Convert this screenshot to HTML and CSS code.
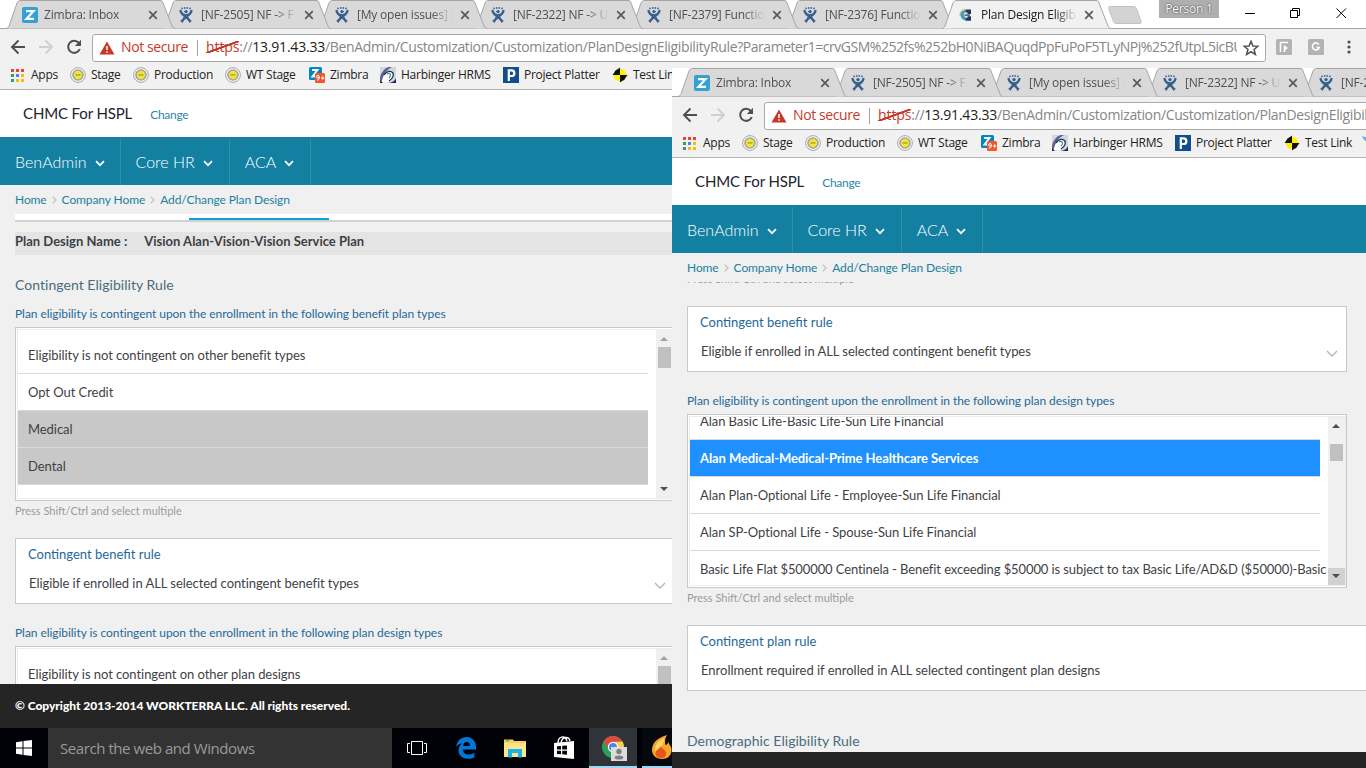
FILE: index.html
```
<!DOCTYPE html>
<html lang="en">
<head>
    <meta charset="UTF-8">
    <meta name="viewport" content="width=device-width, initial-scale=1.0">
    <title>Plan Design Eligibility Rule</title>
    <link rel="stylesheet" href="styles.css">
</head>
<body>

    <!-- Shared icons -->
    <svg class="sprite" aria-hidden="true">
        <symbol id="tab-shape" viewBox="0 0 169 29">
            <path d="M0 28.5 C2 28 2.500 27 3 26 L11 3 C12 1 13 .5 14 .5 H154 C156 .5 156.500 1 157 3 L166 26 C166.500 27.500 167 28 169 28.500" stroke="#a6a6a6"/>
        </symbol>
        <symbol id="zimbra" viewBox="0 0 16 16">
            <rect width="16" height="16" rx="2" fill="#35a0d4"/>
            <path d="M4 4.200 H11.500 L4.500 11.800 H12" fill="none" stroke="#fff" stroke-width="2.200"/>
        </symbol>
        <symbol id="jira" viewBox="0 0 14 16">
            <g fill="#39618d">
                <circle cx="3" cy="1.300" r=".9"/><circle cx="5.700" cy=".9" r=".9"/><circle cx="8.300" cy=".9" r=".9"/><circle cx="11" cy="1.300" r=".9"/>
                <circle cx="7" cy="4.600" r="1.700"/>
                <path d="M.3 3.300 L2.500 2.800 C3 5.500 4.300 7 7 7.300 C9.700 7 11 5.500 11.500 2.800 L13.700 3.300 C13.200 6.500 11.700 8.300 9.300 9.500 C9.700 11.200 11 12.700 12.700 13.700 L10.700 16 C9.500 14.500 8.500 12.600 7 11.800 C5.500 12.600 4.500 14.500 3.300 16 L1.300 13.700 C3 12.700 4.300 11.200 4.700 9.500 C2.300 8.300 .8 6.500 .3 3.300Z"/>
            </g>
        </symbol>
        <symbol id="close" viewBox="0 0 10 10">
            <path d="M1.200 1.200 L8.800 8.800 M8.800 1.200 L1.200 8.800" stroke="#5a5a5a" stroke-width="1.700"/>
        </symbol>
        <symbol id="back" viewBox="0 0 16 16">
            <path d="M8.500 1.500 L2 8 L8.500 14.500 M2 8 H15" fill="none" stroke="#4f4f4f" stroke-width="1.900"/>
        </symbol>
        <symbol id="forward" viewBox="0 0 16 16">
            <path d="M7.500 1.500 L14 8 L7.500 14.500 M14 8 H1" fill="none" stroke="#d0d0d0" stroke-width="1.900"/>
        </symbol>
        <symbol id="reload" viewBox="0 0 16 16">
            <path d="M12.800 4 A6 6 0 1 0 13.800 10" fill="none" stroke="#4f4f4f" stroke-width="2"/>
            <path d="M15 .8 V7 H8.800Z" fill="#4f4f4f"/>
        </symbol>
        <symbol id="warning" viewBox="0 0 16 14">
            <path d="M8 .5 L15.500 13.500 H.5Z" fill="#c53929"/>
            <path d="M8 5 V9 M8 10.200 V11.800" stroke="#fff" stroke-width="1.500"/>
        </symbol>
        <symbol id="apps" viewBox="0 0 13 13">
            <g fill="#ea4335"><path d="M0 0h3v3H0zM5 0h3v3H5zM10 0h3v3h-3z"/></g>
            <path d="M0 5h3v3H0zM0 10h3v3H0z" fill="#34a065"/>
            <path d="M5 5h3v3H5z" fill="#4285f4"/>
            <path d="M10 5h3v3h-3zM5 10h3v3H5zM10 10h3v3h-3z" fill="#fbbc05"/>
        </symbol>
        <symbol id="stage" viewBox="0 0 16 16">
            <circle cx="8" cy="8" r="7.400" fill="#f6f6f6" stroke="#a8a8a8"/>
            <circle cx="8" cy="8" r="5" fill="#f2e535" stroke="#a3a3a3" stroke-width="1.600"/>
            <path d="M5.500 8.600 H10.500 V7.200 H5.500Z" fill="#a89f3a"/>
        </symbol>
        <symbol id="zimbra-badge" viewBox="0 0 16 16">
            <rect width="13" height="13" rx="1.500" fill="#0087c3"/>
            <path d="M3 3 H8.500 L3.500 9.500 H7" fill="none" stroke="#fff" stroke-width="1.900"/>
            <rect x="6" y="6" width="10" height="10" rx="1.500" fill="#f1592a"/>
            <circle cx="9" cy="9.800" r="1.300" fill="none" stroke="#fff"/>
            <path d="M10.400 9.800 C10.400 12 10 13 8 13.200 M12 11 H15.400 M13.700 9.300 V12.700" fill="none" stroke="#fff"/>
        </symbol>
        <symbol id="harbinger" viewBox="0 0 16 16">
            <rect width="16" height="16" fill="#d4d6dc"/>
            <path d="M0 16 V11 C1 5 5 1 9 0 H12 C6 3 4 8 3 12Z" fill="#5b6192"/>
            <path d="M2 15.500 C2 9 6 4 11 5 C15 7 14 12 8 15.500Z" fill="#fff"/>
            <path d="M4 8 C7 3.500 11 3.500 13 6 C14 9 12 12 9 14" fill="none" stroke="#252558" stroke-width="1.300"/>
            <path d="M7 7 C10 5 12 8 9 11" fill="none" stroke="#2f9e8e" stroke-width="1.200"/>
            <path d="M16 11 V16 H9 C13 15 15 14 16 11Z M0 13 L3 16 H0Z" fill="#252558"/>
        </symbol>
        <symbol id="platter" viewBox="0 0 16 16">
            <rect width="16" height="16" fill="#124e8c"/>
            <path d="M5.800 14 V3.300 H8.500 A2.600 2.600 0 0 1 8.500 9 H6" fill="none" stroke="#fff" stroke-width="2.200"/>
        </symbol>
        <symbol id="testlink" viewBox="0 0 16 16">
            <circle cx="8" cy="8" r="6.300" fill="#fff200"/>
            <path d="M8 8 V.5 L6 2 A6.300 6.300 0 0 0 2 6 L.5 8Z M8 8 V15.500 L10 14 A6.300 6.300 0 0 0 14 10 L15.500 8Z" fill="#111"/>
        </symbol>
        <symbol id="caret" viewBox="0 0 10 7">
            <path d="M1 1.200 L5 5.200 L9 1.200" fill="none" stroke="#fff" stroke-width="1.700"/>
        </symbol>
        <symbol id="crumb-arrow" viewBox="0 0 5 8">
            <path d="M.8 .8 L4 4 L.8 7.200" fill="none" stroke="#c4c4c4" stroke-width="1.300"/>
        </symbol>
        <symbol id="select-arrow" viewBox="0 0 12 8">
            <path d="M1 1 L6 6 L11 1" fill="none" stroke="#b4b4b4" stroke-width="1.300"/>
        </symbol>
    </svg>

    <div class="window main-window">
        <div class="tabs">
            <div class="tab"><svg class="shape"><use href="#tab-shape"/></svg><svg class="fav"><use href="#zimbra"/></svg><span class="title">Zimbra: Inbox</span><svg class="x"><use href="#close"/></svg></div>
            <div class="tab"><svg class="shape"><use href="#tab-shape"/></svg><svg class="fav"><use href="#jira"/></svg><span class="title">[NF-2505] NF -&gt; F</span><svg class="x"><use href="#close"/></svg></div>
            <div class="tab"><svg class="shape"><use href="#tab-shape"/></svg><svg class="fav"><use href="#jira"/></svg><span class="title">[My open issues] I</span><svg class="x"><use href="#close"/></svg></div>
            <div class="tab"><svg class="shape"><use href="#tab-shape"/></svg><svg class="fav"><use href="#jira"/></svg><span class="title">[NF-2322] NF -&gt; U</span><svg class="x"><use href="#close"/></svg></div>
            <div class="tab"><svg class="shape"><use href="#tab-shape"/></svg><svg class="fav"><use href="#jira"/></svg><span class="title">[NF-2379] Functio</span><svg class="x"><use href="#close"/></svg></div>
            <div class="tab"><svg class="shape"><use href="#tab-shape"/></svg><svg class="fav"><use href="#jira"/></svg><span class="title">[NF-2376] Functio</span><svg class="x"><use href="#close"/></svg></div>
            <div class="tab active"><svg class="shape"><use href="#tab-shape"/></svg>
                <svg class="fav" viewBox="0 0 16 16">
                    <path d="M7 2 C3.500 3 1.800 5.500 2 9" fill="none" stroke="#e6c25a" stroke-width="1.300"/>
                    <path d="M2.500 7 C2.500 11 4.500 13 7.500 13.500 V10 C6 9.500 5.500 8 6 6.500 L7.500 5 V2.800 C5 3.500 3 5 2.500 7Z" fill="#3f9dc4"/>
                    <path d="M7.500 2.500 H13 V7 H9.500 V5.500 H7.500Z M7.500 13.800 H13 V9.200 H9.500 V10.700 H7.500Z" fill="#223a5e"/>
                    <path d="M6.500 8.100 H12" stroke="#223a5e" stroke-width="1.300"/>
                </svg>
                <span class="title">Plan Design Eligib</span><svg class="x"><use href="#close"/></svg></div>
            <svg class="new-tab" viewBox="0 0 34 18"><path d="M3 .5 H25 C27 .5 28 1 28.500 2.500 L33 15 C33.500 17 33 17.500 31 17.500 H9 C7 17.500 6 17 5.500 15.500 L.8 3 C.3 1 1 .5 3 .5Z" fill="#d3d3d3" stroke="#c2c2c2"/></svg>
            <span class="person">Person 1</span>
            <svg class="controls" viewBox="0 0 104 12" fill="none" stroke="#000">
                <path d="M0 6.500 H10 M45.500 3.500 H52.500 V10.500 H45.500Z M47.500 3.500 V1.500 H54.500 V8.500 H52.500 M91.500 1.500 L101 11 M101 1.500 L91.500 11"/>
            </svg>
        </div>

        <div class="toolbar">
            <svg class="nav-icon"><use href="#back"/></svg>
            <svg class="nav-icon"><use href="#forward"/></svg>
            <svg class="nav-icon"><use href="#reload"/></svg>
            <div class="address">
                <svg class="warn"><use href="#warning"/></svg>
                <span class="insecure">Not secure</span>
                <span class="url"><span class="scheme">https</span>://<b>13.91.43.33</b>/BenAdmin/Customization/Customization/PlanDesignEligibilityRule?<span class="query">Parameter1=crvGSM%252fs%252bH0NiBAQuqdPpFuPoF5TLyNPj%252fUtpL5icBU</span></span>
                <svg class="star" viewBox="0 0 14 14"><path d="M7 1.200 L8.700 5.200 L13 5.500 L9.700 8.300 L10.800 12.600 L7 10.300 L3.200 12.600 L4.300 8.300 L1 5.500 L5.300 5.200Z" fill="none" stroke="#555" stroke-width="1.400"/></svg>
            </div>
            <svg class="ext" viewBox="0 0 16 16"><rect width="16" height="16" rx="1.500" fill="#b3b3b3"/><path d="M4.500 13 V3.500 H12 M8.500 13 V7" fill="none" stroke="#fff" stroke-width="1.500"/><path d="M8 6 L12 9 L8 12Z" fill="#fff"/></svg>
            <svg class="ext" viewBox="0 0 16 16"><rect width="16" height="16" rx="1.500" fill="#b3b3b3"/><path d="M10.800 5.500 A3.500 3.500 0 1 0 11.200 8.500 H8.500" fill="none" stroke="#fff" stroke-width="1.600"/></svg>
            <svg class="menu" viewBox="0 0 4 14"><g fill="#4f4f4f"><circle cx="2" cy="2" r="1.600"/><circle cx="2" cy="7" r="1.600"/><circle cx="2" cy="12" r="1.600"/></g></svg>
        </div>

        <div class="bookmarks">
            <span class="bm apps"><svg><use href="#apps"/></svg>Apps</span>
            <span class="bm"><svg><use href="#stage"/></svg>Stage</span>
            <span class="bm"><svg><use href="#stage"/></svg>Production</span>
            <span class="bm"><svg><use href="#stage"/></svg>WT Stage</span>
            <span class="bm"><svg><use href="#zimbra-badge"/></svg>Zimbra</span>
            <span class="bm"><svg><use href="#harbinger"/></svg>Harbinger HRMS</span>
            <span class="bm"><svg><use href="#platter"/></svg>Project Platter</span>
            <span class="bm"><svg><use href="#testlink"/></svg>Test Link</span>
        </div>

        <div class="site-header">
            <span class="company">CHMC For HSPL</span>
            <a class="change">Change</a>
        </div>
        <div class="site-nav">
            <a>BenAdmin <svg><use href="#caret"/></svg></a>
            <a>Core HR <svg><use href="#caret"/></svg></a>
            <a>ACA <svg><use href="#caret"/></svg></a>
        </div>
        <div class="crumbs">
            <a>Home</a><svg><use href="#crumb-arrow"/></svg><a>Company Home</a><svg><use href="#crumb-arrow"/></svg><a>Add/Change Plan Design</a>
        </div>

        <div class="content">
            <div class="step-bar"><div class="step-active"></div></div>
            <div class="plan-name"><span>Plan Design Name :</span><span>Vision Alan-Vision-Vision Service Plan</span></div>
            <h2>Contingent Eligibility Rule</h2>
            <p class="label">Plan eligibility is contingent upon the enrollment in the following benefit plan types</p>
            <div class="listbox">
                <div class="list">
                    <div class="options">
                        <div class="option">Eligibility is not contingent on other benefit types</div>
                        <div class="option">Opt Out Credit</div>
                        <div class="option chosen">Medical</div>
                        <div class="option chosen">Dental</div>
                    </div>
                    <div class="scroll"><i class="up off"></i><i class="thumb"></i><i class="down"></i></div>
                </div>
            </div>
            <p class="hint">Press Shift/Ctrl and select multiple</p>
            <div class="rule">
                <div class="rule-label">Contingent benefit rule</div>
                <div class="rule-value">Eligible if enrolled in ALL selected contingent benefit types<svg><use href="#select-arrow"/></svg></div>
            </div>
            <p class="label after-rule">Plan eligibility is contingent upon the enrollment in the following plan design types</p>
            <div class="listbox">
                <div class="list">
                    <div class="options">
                        <div class="option">Eligibility is not contingent on other plan designs</div>
                    </div>
                    <div class="scroll"><i class="up off"></i><i class="thumb"></i><i class="down"></i></div>
                </div>
            </div>
        </div>
        <div class="footer">© Copyright 2013-2014 WORKTERRA LLC. All rights reserved.</div>
    </div>

    <div class="taskbar">
        <div class="start"><svg viewBox="0 0 16 16"><path d="M0 2.200 L6.500 1.300 V7.500 H0Z M7.500 1.100 L16 0 V7.500 H7.500Z M0 8.500 H6.500 V14.700 L0 13.800Z M7.500 8.500 H16 V16 L7.500 14.900Z" fill="#fff"/></svg></div>
        <div class="search">Search the web and Windows</div>
        <div class="task"><svg viewBox="0 0 20 14" width="20" height="14"><path d="M4.500 .5 H15.500 V13.500 H4.500Z M3 2.500 H.5 V11.500 H3 M17 2.500 H19.500 V11.500 H17" fill="none" stroke="#fff"/></svg></div>
        <div class="task"><svg viewBox="0 0 20 22" width="20" height="22"><path d="M0 10 C1 3.500 5.500 0 10.500 0 C16.500 0 20 4.500 20 10 V12.500 H6.800 C7 16 9.500 17.500 12.500 17.500 C15 17.500 17 16.800 18.500 16 V20.200 C16.500 21.300 14.500 21.800 12 21.800 C6 21.800 2.500 18 2.500 13.500 C2.500 10.500 4 8 6.500 6.300 C3.500 6.500 1.500 8 0 10Z M7 9 H14 C14 6.500 13 5 10.800 5 C8.800 5 7.400 6.500 7 9Z" fill="#0078d7" fill-rule="evenodd"/></svg></div>
        <div class="task"><svg viewBox="0 0 22 19" width="22" height="19"><path d="M0 .5 H9 L10 2 H22 V18 H0Z" fill="#f5ce5c"/><path d="M0 4 H22 V18 H0Z" fill="#ffe48c"/><path d="M2 1 H5 V2.300 H2Z" fill="#5fb548"/><path d="M4 18.500 V10 H18 V18.500 H14 V14 H8 V18.500Z" fill="#1ab2e8"/></svg></div>
        <div class="task"><svg viewBox="0 0 22 24" width="22" height="24"><path d="M1 7 L21 5 V23 L1 21Z" fill="#fff"/><path d="M5 7 C5 0 12 -1 14 5 M8 7 C9 0 16 0 17 5" fill="none" stroke="#fff" stroke-width="1.400"/><path d="M4 10.300 L8 10 V13.500 H4Z M9.200 9.800 L14 9.400 V13.500 H9.200Z M4 14.700 H8 V18.200 L4 17.900Z M9.200 14.700 H14 V18.800 L9.200 18.300Z" fill="#05070a"/></svg></div>
        <div class="task open chrome"><svg viewBox="0 0 26 26" width="26" height="26">
            <circle cx="12" cy="12" r="11" fill="#27a25a"/>
            <path d="M2.500 6.500 A11 11 0 0 1 21.500 6.500 L12 7 L7.500 14Z" fill="#dd4b3e"/>
            <path d="M21.500 6.500 A11 11 0 0 1 12 23 L16.500 14 L12 7Z" fill="#fdd042"/>
            <circle cx="12" cy="12" r="5.200" fill="#fff"/><circle cx="12" cy="12" r="4" fill="#4387f0"/>
            <path d="M10 12 H26 V26 H10Z" fill="#dcdcdc"/><circle cx="18" cy="16.500" r="2.700" fill="#808080"/><ellipse cx="18" cy="22.500" rx="4.300" ry="2" fill="#808080"/></svg></div>
        <div class="task open flame"><svg viewBox="0 0 22 24" width="22" height="24">
            <path d="M16 0 C6 3 1 8 1 15 C1 20 5 24 11 24 C17 24 21 20 20.500 14 C20 11 18 10 17.500 7 C16.500 9 16 10 14.500 10 C13.500 7 14 3 16 0Z" fill="#f7a62a"/>
            <path d="M13 3 C6 7 3 11 4 17 C7 12 13 13 13 3Z" fill="#fdd66b"/>
            <path d="M9 11 C10 14 4 15 4.500 19 C5 22 8 23 10.500 23 C14 23 16 20 15 17 C14.500 15.500 13 16 13 14 C11.500 14 10.500 13 9 11Z" fill="#e4561c"/></svg></div>
    </div>

    <div class="window second-window">
        <div class="tabs">
            <div class="tab"><svg class="shape"><use href="#tab-shape"/></svg><svg class="fav"><use href="#zimbra"/></svg><span class="title">Zimbra: Inbox</span><svg class="x"><use href="#close"/></svg></div>
            <div class="tab"><svg class="shape"><use href="#tab-shape"/></svg><svg class="fav"><use href="#jira"/></svg><span class="title">[NF-2505] NF -&gt; F</span><svg class="x"><use href="#close"/></svg></div>
            <div class="tab"><svg class="shape"><use href="#tab-shape"/></svg><svg class="fav"><use href="#jira"/></svg><span class="title">[My open issues] I</span><svg class="x"><use href="#close"/></svg></div>
            <div class="tab"><svg class="shape"><use href="#tab-shape"/></svg><svg class="fav"><use href="#jira"/></svg><span class="title">[NF-2322] NF -&gt; U</span><svg class="x"><use href="#close"/></svg></div>
            <div class="tab"><svg class="shape"><use href="#tab-shape"/></svg><svg class="fav"><use href="#jira"/></svg><span class="title">[NF-2</span></div>
        </div>

        <div class="toolbar">
            <svg class="nav-icon"><use href="#back"/></svg>
            <svg class="nav-icon"><use href="#forward"/></svg>
            <svg class="nav-icon"><use href="#reload"/></svg>
            <div class="address">
                <svg class="warn"><use href="#warning"/></svg>
                <span class="insecure">Not secure</span>
                <span class="url"><span class="scheme">https</span>://<b>13.91.43.33</b>/BenAdmin/Customization/Customization/PlanDesignEligibil</span>
            </div>
        </div>

        <div class="bookmarks">
            <span class="bm apps"><svg><use href="#apps"/></svg>Apps</span>
            <span class="bm"><svg><use href="#stage"/></svg>Stage</span>
            <span class="bm"><svg><use href="#stage"/></svg>Production</span>
            <span class="bm"><svg><use href="#stage"/></svg>WT Stage</span>
            <span class="bm"><svg><use href="#zimbra-badge"/></svg>Zimbra</span>
            <span class="bm"><svg><use href="#harbinger"/></svg>Harbinger HRMS</span>
            <span class="bm"><svg><use href="#platter"/></svg>Project Platter</span>
            <span class="bm"><svg><use href="#testlink"/></svg>Test Link</span>
            <span class="bm"><svg viewBox="0 0 16 16"><path d="M0 1 C3 2 6 3 9 4 L6 7 C3 6 1 4 0 1Z" fill="#55b4e4"/></svg></span>
        </div>

        <div class="site-header">
            <span class="company">CHMC For HSPL</span>
            <a class="change">Change</a>
        </div>
        <div class="site-nav">
            <a>BenAdmin <svg><use href="#caret"/></svg></a>
            <a>Core HR <svg><use href="#caret"/></svg></a>
            <a>ACA <svg><use href="#caret"/></svg></a>
        </div>
        <div class="crumbs">
            <a>Home</a><svg><use href="#crumb-arrow"/></svg><a>Company Home</a><svg><use href="#crumb-arrow"/></svg><a>Add/Change Plan Design</a>
        </div>

        <div class="content">
            <p class="hint cut">Press Shift/Ctrl and select multiple</p>
            <div class="rule">
                <div class="rule-label">Contingent benefit rule</div>
                <div class="rule-value">Eligible if enrolled in ALL selected contingent benefit types<svg><use href="#select-arrow"/></svg></div>
            </div>
            <p class="label after-rule">Plan eligibility is contingent upon the enrollment in the following plan design types</p>
            <div class="listbox">
                <div class="list">
                    <div class="options scrolled">
                        <div class="option">Alan Basic Life-Basic Life-Sun Life Financial</div>
                        <div class="option selected">Alan Medical-Medical-Prime Healthcare Services</div>
                        <div class="option">Alan Plan-Optional Life - Employee-Sun Life Financial</div>
                        <div class="option">Alan SP-Optional Life - Spouse-Sun Life Financial</div>
                        <div class="option long">Basic Life Flat $500000 Centinela - Benefit exceeding $50000 is subject to tax Basic Life/AD&amp;D ($50000)-Basic</div>
                    </div>
                    <div class="scroll"><i class="up"></i><i class="thumb lower"></i><i class="down hover"></i></div>
                </div>
            </div>
            <p class="hint">Press Shift/Ctrl and select multiple</p>
            <div class="rule wide">
                <div class="rule-label">Contingent plan rule</div>
                <div class="rule-value">Enrollment required if enrolled in ALL selected contingent plan designs</div>
            </div>
            <h2 class="demographic">Demographic Eligibility Rule</h2>
        </div>
        <div class="footer"></div>
    </div>

</body>
</html>
```
FILE: styles.css
```
* {
    box-sizing: border-box;
}

body {
    margin: 0;
    width: 1366px;
    height: 768px;
    overflow: hidden;
    position: relative;
    background: #000207;
    font-family: Lato, "Liberation Sans", sans-serif;
    color: #3f3f46;
}

svg {
    display: block;
    flex: none;
}

.sprite {
    position: absolute;
    width: 0;
    height: 0;
}

p, h2 {
    margin: 0;
}

/* Windows */
.window {
    display: flex;
    flex-direction: column;
    overflow: hidden;
    background: #f0f0f0;
}

.main-window {
    width: 1366px;
    height: 728px;
}

.second-window {
    position: absolute;
    left: 672px;
    top: 68px;
    width: 694px;
    height: 700px;
}

/* Tab strip */
.tabs {
    display: flex;
    flex: none;
    height: 29px;
    padding-left: 6px;
    background: #fff;
    border-bottom: 1px solid #a6a6a6;
    position: relative;
    z-index: 0;
    font-family: "Open Sans", "Noto Sans", sans-serif;
    font-size: 12px;
    letter-spacing: -0.2px;
    color: #505050;
}

.tab {
    display: flex;
    flex: none;
    align-items: center;
    position: relative;
    width: 169px;
    height: 29px;
    margin-right: -13px;
    padding: 0 0 0 16px;
}

.tab:nth-child(1) { z-index: 6; }
.tab:nth-child(2) { z-index: 5; }
.tab:nth-child(3) { z-index: 4; }
.tab:nth-child(4) { z-index: 3; }
.tab:nth-child(5) { z-index: 2; }
.tab:nth-child(6) { z-index: 1; }

.shape {
    position: absolute;
    left: 0;
    top: 0;
    width: 169px;
    height: 29px;
    fill: #d9d9d9;
    z-index: -1;
}

.tab.active {
    z-index: 7;
    color: #222;
}

.active .shape {
    fill: #f1f1f1;
}

.fav {
    width: 16px;
    height: 16px;
}

.title {
    width: 98px;
    margin: 0 6px;
    line-height: 16px;
    white-space: nowrap;
    overflow: hidden;
    -webkit-mask-image: linear-gradient(to right, #000 76px, transparent 97px);
    mask-image: linear-gradient(to right, #000 76px, transparent 97px);
}

.tab:nth-child(n+2) .title {
    padding-left: 1px;
}

.x {
    width: 10px;
    height: 10px;
}

.new-tab {
    width: 34px;
    height: 18px;
    margin: 6px 0 0 10px;
}

.person {
    width: 60px;
    height: 18px;
    margin-left: 17px;
    background: #afafaf;
    color: #fff;
    line-height: 17px;
    text-align: center;
    text-shadow: 0 0 2px #444, 0 0 1px #555;
}

.controls {
    width: 104px;
    height: 12px;
    margin: 7px 0 0 26px;
}

/* Toolbar */
.toolbar {
    display: flex;
    flex: none;
    align-items: center;
    height: 33px;
    padding: 3px 0 0 10px;
    background: #f1f1f1;
    font-family: "Open Sans", "Noto Sans", sans-serif;
    font-size: 14px;
}

.nav-icon {
    width: 16px;
    height: 16px;
    margin-right: 12px;
}

.address {
    display: flex;
    flex: none;
    align-items: center;
    width: 1174px;
    height: 28px;
    margin: 1px 0 0 -2px;
    padding-left: 6px;
    background: #fff;
    border: 1px solid #a9a9a9;
    border-radius: 3px;
}

.warn {
    width: 16px;
    height: 14px;
}

.insecure {
    width: 77px;
    height: 16px;
    margin-left: 6px;
    line-height: 14px;
    border-right: 1px solid #a0a0a0;
    color: #c5392b;
    white-space: nowrap;
    letter-spacing: -0.4px;
}

.url {
    width: 1031px;
    margin: -2px 0 0 8px;
    line-height: 22px;
    overflow: hidden;
    white-space: nowrap;
    color: #868686;
    letter-spacing: -0.36px;
}

.url b {
    font-weight: normal;
    color: #222;
    letter-spacing: -0.2px;
}

.query {
    letter-spacing: -0.47px;
}

.scheme {
    color: #c5392b;
    letter-spacing: -0.1px;
    background: linear-gradient(to bottom right, transparent 45%, #c5392b 47%, #c5392b 54%, transparent 56%) 0 4px / 100% 12px no-repeat;
}

.star {
    width: 16px;
    height: 16px;
    margin-left: 6px;
}

.ext {
    width: 16px;
    height: 16px;
    margin-left: 10px;
}

.ext + .ext {
    margin-left: 16px;
}

.menu {
    width: 4px;
    height: 14px;
    margin-left: 23px;
}

/* Bookmarks bar */
.bookmarks {
    display: grid;
    flex: none;
    grid-template-columns: 59px 63px 92px 84px 71px 123px 109px 78px 16px;
    align-items: center;
    height: 28px;
    padding: 0 0 1px 11px;
    background: #f1f1f1;
    border-bottom: 1px solid #b4b4b4;
    font-family: "Open Sans", "Noto Sans", sans-serif;
    font-size: 12px;
    letter-spacing: -0.25px;
    color: #222;
}

.bm {
    display: flex;
    align-items: center;
    gap: 5px;
    line-height: 16px;
    white-space: nowrap;
}

.bm svg {
    width: 16px;
    height: 16px;
}

.bm.apps {
    gap: 7px;
}

.bm.apps svg {
    width: 13px;
    height: 13px;
}

/* Site */
.site-header {
    display: flex;
    flex: none;
    align-items: center;
    height: 47px;
    padding: 0 0 2px 23px;
    background: #fff;
}

.company {
    font-size: 15px;
    letter-spacing: -0.13px;
    color: #22222e;
}

.change {
    margin: 3px 0 0 18px;
    font-size: 12px;
    letter-spacing: -0.3px;
    color: #2b84a8;
}

.site-nav {
    display: flex;
    flex: none;
    height: 48px;
    background: #1380a2;
}

.site-nav a {
    display: flex;
    align-items: center;
    gap: 8px;
    height: 46px;
    margin-top: 2px;
    padding: 0 16px 2px 15px;
    border-right: 1px solid #3290ae;
    color: #fff;
    font-size: 16px;
    font-weight: 300;
}

.site-nav a:first-child {
    padding-right: 15px;
}

.site-nav svg {
    width: 10px;
    height: 7px;
    margin-top: 4px;
}

.crumbs {
    display: flex;
    flex: none;
    align-items: center;
    height: 29px;
    padding-left: 15px;
    font-size: 12px;
    line-height: 16px;
    letter-spacing: -0.1px;
    color: #1b7fa3;
}

.crumbs svg {
    width: 5px;
    height: 8px;
    margin: 0 5px;
}

.content {
    flex: 1;
    min-height: 0;
    overflow: hidden;
    padding-left: 15px;
}

.step-bar {
    display: flex;
    align-items: flex-end;
    height: 8px;
    background: #fff;
    border-bottom: 2px solid #d2d2d2;
}

.step-active {
    width: 140px;
    height: 2px;
    margin-left: 174px;
    background: #0f9fd5;
}

.plan-name {
    display: flex;
    gap: 17px;
    height: 23px;
    margin-top: 10px;
    background: #e4e4e4;
    font-size: 13px;
    font-weight: bold;
    line-height: 18px;
}

h2 {
    margin-top: 20px;
    font-size: 14px;
    font-weight: normal;
    line-height: 20px;
    letter-spacing: 0.04px;
    color: #4b6b7c;
}

.demographic {
    margin-top: 40px;
}

.label {
    margin-top: 11px;
    font-size: 12px;
    line-height: 16px;
    letter-spacing: -0.055px;
    color: #1f6999;
}

.label.after-rule {
    margin-top: 21px;
}

.hint {
    margin-top: 2px;
    font-size: 11px;
    line-height: 16px;
    color: #9b9b9b;
}

.hint.cut {
    margin-top: -11px;
}

.listbox {
    width: 660px;
    height: 174px;
    margin-top: 5px;
    padding: 1px 0 1px 1px;
    background: #fff;
    border: 1px solid #c9c9c9;
}

.list {
    display: flex;
    height: 170px;
    overflow: hidden;
    border: 1px solid #ececec;
}

.options {
    flex: 1;
    min-width: 0;
    padding-top: 7px;
    overflow: hidden;
}

.options.scrolled {
    margin-top: -14px;
    padding-top: 0;
}

.option {
    width: 630px;
    height: 37px;
    padding-left: 10px;
    border-bottom: 1px solid #d9d9d9;
    font-size: 13px;
    line-height: 36px;
    letter-spacing: -0.055px;
    white-space: nowrap;
}

.option.long {
    letter-spacing: -0.1px;
}

.option.chosen {
    background: #c8c8c8;
}

.option.selected {
    background: #1e90ff;
    color: #fff;
    font-weight: bold;
    letter-spacing: -0.08px;
}

.scroll {
    display: flex;
    flex: none;
    flex-direction: column;
    width: 17px;
    background: #f0f0f0;
}

.scroll i {
    position: relative;
}

.up, .down {
    height: 17px;
}

.up::after, .down::after {
    content: "";
    position: absolute;
    left: 4px;
    top: 7px;
    border: 4px solid transparent;
    border-top-width: 0;
    border-bottom-color: #4d4d4d;
}

.up.off::after {
    border-bottom-color: #a0a0a0;
}

.down::after {
    top: 6px;
    border-width: 4px 4px 0;
    border-color: #4d4d4d transparent transparent;
}

.down {
    margin-top: auto;
}

.down.hover {
    background: #d1d1d1;
}

.thumb {
    height: 21px;
    margin: 0 2px;
    background: #c0c0c0;
}

.thumb.lower {
    height: 17px;
    margin-top: 10px;
}

.rule {
    width: 660px;
    height: 66px;
    margin-top: 19px;
    padding: 6px 8px 0 12px;
    background: #fff;
    border: 1px solid #c9c9c9;
    font-size: 13px;
}

.rule.wide {
    width: 720px;
}

.rule-label {
    line-height: 18px;
    color: #1f6999;
}

.rule-value {
    display: flex;
    justify-content: space-between;
    margin-top: 11px;
    padding-left: 1px;
    line-height: 18px;
    letter-spacing: -0.05px;
}

.wide .rule-value {
    letter-spacing: -0.01px;
}

.rule-value svg {
    width: 12px;
    height: 8px;
    margin-top: 8px;
}

.footer {
    flex: none;
    height: 44px;
    padding-left: 15px;
    background: #252525;
    color: #fff;
    font-size: 12px;
    font-weight: 900;
    line-height: 44px;
    letter-spacing: -0.02px;
}

.second-window .footer {
    height: 16px;
}

/* Windows taskbar */
.taskbar {
    display: flex;
    height: 40px;
    background: #000207;
}

.start {
    display: flex;
    align-items: center;
    justify-content: center;
    width: 48px;
}

.start svg {
    width: 16px;
    height: 16px;
}

.search {
    width: 344px;
    padding-left: 12px;
    background: #333;
    color: #9a9a9a;
    font-family: "Open Sans", "Noto Sans", sans-serif;
    font-size: 15px;
    line-height: 40px;
    letter-spacing: -0.43px;
}

.task {
    display: flex;
    align-items: center;
    justify-content: center;
    width: 49px;
}

.task.open {
    width: 48px;
    background: #303338;
    border-bottom: 2px solid #9fd5f5;
}

.task.chrome {
    margin-left: 1px;
    padding: 2px 0 0 2px;
}

.task.flame {
    margin-left: 5px;
    padding-right: 9px;
    background: #05080c;
}
```
